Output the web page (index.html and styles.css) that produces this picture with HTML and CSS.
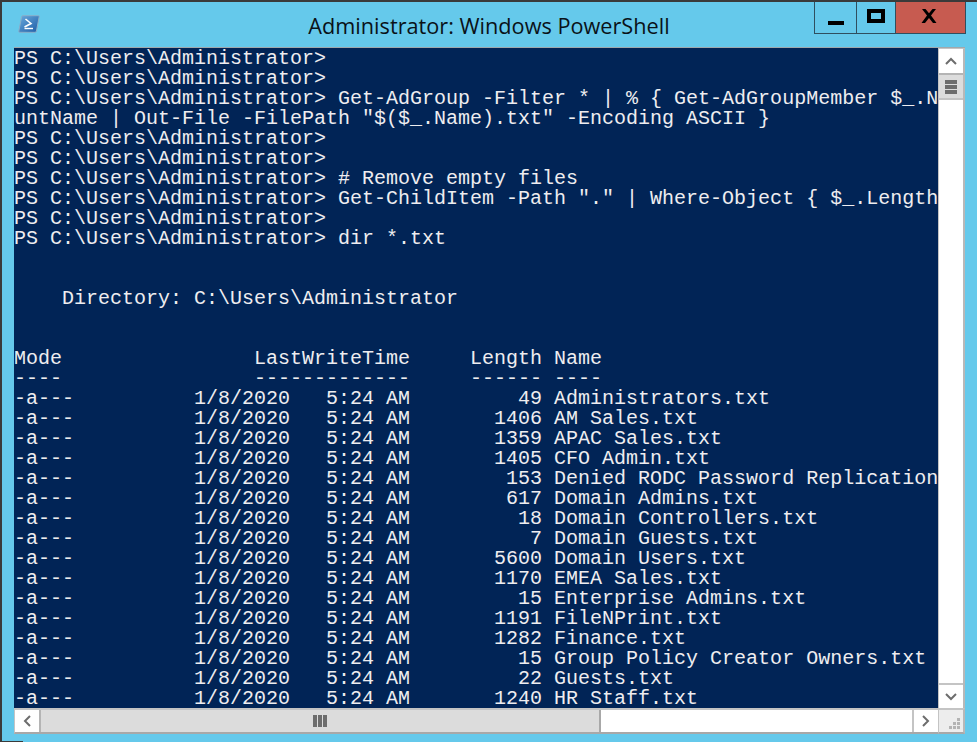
FILE: index.html
```html
<!DOCTYPE html>
<html lang="en">
<head>
<meta charset="utf-8">
<title>Administrator: Windows PowerShell</title>
<link rel="stylesheet" href="styles.css">
</head>
<body>
<div class="window">
  <header class="titlebar">
    <svg class="app-icon" width="22" height="18" viewBox="0 0 22 18">
      <defs><linearGradient id="g" x1="0" y1="0" x2="1" y2="1"><stop offset="0" stop-color="#6aa9dc"/><stop offset="1" stop-color="#1c5ca6"/></linearGradient></defs>
      <path d="M4.8 0.7 H20.3 Q21.5 0.7 21.2 1.8 L18.4 16.2 Q18.2 17.3 17 17.3 H1.7 Q0.5 17.3 0.8 16.2 L3.6 1.8 Q3.8 0.7 4.8 0.7Z" fill="url(#g)" stroke="#8aaec9"/>
      <path d="M7.5 4 L13 8.5 L6.5 12" fill="none" stroke="#fff" stroke-width="1.6"/>
      <path d="M6.5 13.5 H15" stroke="#fff" stroke-width="1.4"/>
    </svg>
    <h1 class="title">Administrator: Windows PowerShell</h1>
    <div class="controls">
      <div class="ctl ctl-min"><span class="min-glyph"></span></div>
      <div class="ctl ctl-max"><span class="max-glyph"></span></div>
      <div class="ctl ctl-close">
        <svg width="16" height="14" viewBox="0 0 16 14"><path d="M1 0 H4.5 L8 4.2 L11.5 0 H15 L10 6.5 L15.5 14 H12 L8 9 L4 14 H0.5 L6 6.5Z" fill="#000"/></svg>
      </div>
    </div>
  </header>
  <div class="client">
    <pre class="console">PS C:\Users\Administrator&gt;
PS C:\Users\Administrator&gt;
PS C:\Users\Administrator&gt; Get-AdGroup -Filter * | % { Get-AdGroupMember $_.N
untName | Out-File -FilePath "$($_.Name).txt" -Encoding ASCII }
PS C:\Users\Administrator&gt;
PS C:\Users\Administrator&gt;
PS C:\Users\Administrator&gt; # Remove empty files
PS C:\Users\Administrator&gt; Get-ChildItem -Path "." | Where-Object { $_.Length
PS C:\Users\Administrator&gt;
PS C:\Users\Administrator&gt; dir *.txt


    Directory: C:\Users\Administrator


Mode                LastWriteTime     Length Name
----                -------------     ------ ----
-a---          1/8/2020   5:24 AM         49 Administrators.txt
-a---          1/8/2020   5:24 AM       1406 AM Sales.txt
-a---          1/8/2020   5:24 AM       1359 APAC Sales.txt
-a---          1/8/2020   5:24 AM       1405 CFO Admin.txt
-a---          1/8/2020   5:24 AM        153 Denied RODC Password Replication
-a---          1/8/2020   5:24 AM        617 Domain Admins.txt
-a---          1/8/2020   5:24 AM         18 Domain Controllers.txt
-a---          1/8/2020   5:24 AM          7 Domain Guests.txt
-a---          1/8/2020   5:24 AM       5600 Domain Users.txt
-a---          1/8/2020   5:24 AM       1170 EMEA Sales.txt
-a---          1/8/2020   5:24 AM         15 Enterprise Admins.txt
-a---          1/8/2020   5:24 AM       1191 FileNPrint.txt
-a---          1/8/2020   5:24 AM       1282 Finance.txt
-a---          1/8/2020   5:24 AM         15 Group Policy Creator Owners.txt
-a---          1/8/2020   5:24 AM         22 Guests.txt
-a---          1/8/2020   5:24 AM       1240 HR Staff.txt</pre>
    <div class="vscroll">
      <div class="sbtn">
        <svg width="12" height="8" viewBox="0 0 12 8"><path d="M1 7 L6 2 L11 7" fill="none" stroke="#6d6d6d" stroke-width="2"/></svg>
      </div>
      <div class="vthumb"><span class="grip-v"></span><span class="grip-v"></span><span class="grip-v"></span></div>
      <div class="vtrack"></div>
      <div class="sbtn sbtn-down">
        <svg width="12" height="8" viewBox="0 0 12 8"><path d="M1 1 L6 6 L11 1" fill="none" stroke="#6d6d6d" stroke-width="2"/></svg>
      </div>
    </div>
    <div class="hscroll">
      <div class="hbtn">
        <svg width="8" height="12" viewBox="0 0 8 12"><path d="M7 1 L2 6 L7 11" fill="none" stroke="#6d6d6d" stroke-width="2"/></svg>
      </div>
      <div class="hthumb"><span class="grip-h"></span><span class="grip-h"></span><span class="grip-h"></span></div>
      <div class="htrack"></div>
      <div class="hbtn hbtn-right">
        <svg width="8" height="12" viewBox="0 0 8 12"><path d="M1 1 L6 6 L1 11" fill="none" stroke="#6d6d6d" stroke-width="2"/></svg>
      </div>
    </div>
    <div class="corner">
      <svg width="12" height="12" viewBox="0 0 12 12" fill="#b4b4b4"><rect x="8" y="0" width="3" height="3"/><rect x="4" y="4" width="3" height="3"/><rect x="8" y="4" width="3" height="3"/><rect x="0" y="8" width="3" height="3"/><rect x="4" y="8" width="3" height="3"/><rect x="8" y="8" width="3" height="3"/></svg>
    </div>
  </div>
</div>
</body>
</html>
```
FILE: styles.css
```css
* { box-sizing: border-box; }
html, body { margin: 0; padding: 0; }
body { width: 977px; height: 742px; overflow: hidden; background: #65c9eb; }
.window {
  position: relative;
  width: 977px; height: 742px;
  display: flex; flex-direction: column;
  background: #65c9eb;
  border-top: 2px solid #3a3a3a;
  border-left: 2px solid #3a3a3a;
  padding: 0 11px 0 12px;
}
.window::after {
  content: "";
  position: absolute; left: -2px; bottom: 0;
  width: 23px; height: 1px;
  background: #3a3a3a;
}
.titlebar {
  height: 45px; flex: none;
  display: flex; align-items: flex-start;
}
.app-icon { margin: 13px 0 0 4px; flex: none; }
.title {
  flex: 1; margin: 10px 0 0 0;
  text-align: center;
  font: 400 21.7px/28px "Open Sans", "Noto Sans", sans-serif;
  color: #0a1218;
  padding-left: 124px;
  white-space: nowrap;
}
.controls { display: flex; height: 32px; flex: none; border: 1px solid #2f4f5f; border-top: 0; }
.ctl { display: flex; align-items: center; justify-content: center; }
.ctl-min { width: 42px; border-right: 1px solid #2f4f5f; }
.ctl-max { width: 39px; border-right: 1px solid #2f4f5f; }
.ctl-close { width: 69px; background: #c75b50; padding: 0 3px 4px 0; }
.min-glyph { width: 16px; height: 4px; background: #000; margin-top: 10px; }
.max-glyph { width: 18px; height: 14px; border: 4px solid #000; margin-bottom: 4px; }
.client {
  display: grid;
  grid-template-columns: 924px 27px;
  grid-template-rows: 660px 26px;
  border-top: 1px solid #a0a8ac;
  width: 951px;
}
.console {
  margin: 0; overflow: hidden;
  background: #012456; color: #eeedf0;
  font: 20px/20px "Liberation Mono", monospace;
  padding: 1px 0 0;
  white-space: pre;
}
.vscroll {
  display: flex; flex-direction: column;
  background: #fff;
  border-left: 1px solid #c4c4c4;
  border-right: 2px solid #b8b8b8;
  border-top: 1px solid #c4c4c4;
}
.sbtn { height: 26px; flex: none; display: flex; align-items: center; justify-content: center; border-bottom: 2px solid #b4b4b4; }
.sbtn-down { border-bottom: 0; border-top: 2px solid #c4c4c4; height: 25px; }
.vthumb {
  height: 25px; flex: none; background: #dcdcdc;
  border-bottom: 2px solid #c4c4c4;
  display: flex; flex-direction: column; align-items: center; justify-content: center; gap: 1px;
}
.grip-v { width: 12px; height: 4px; background: #6d6d6d; }
.vtrack { flex: 1; }
.hscroll {
  display: flex;
  background: #fff;
  border-top: 2px solid #c4c4c4;
  border-bottom: 2px solid #a8a8a8;
  border-left: 1px solid #c4c4c4;
}
.hbtn { width: 26px; flex: none; background: #fff; display: flex; align-items: center; justify-content: center; border-right: 2px solid #b4b4b4; }
.hbtn-right { width: 26px; border-right: 0; border-left: 2px solid #c4c4c4; }
.hthumb {
  width: 560px; flex: none;
  background: #dcdcdc;
  border-right: 2px solid #a8a8a8;
  display: flex; align-items: center; justify-content: center; gap: 1px;
}
.htrack { flex: 1; }
.grip-h { width: 4px; height: 12px; background: #6d6d6d; }
.corner {
  background: #ededed;
  border-top: 2px solid #c4c4c4;
  border-bottom: 2px solid #a8a8a8;
  border-right: 2px solid #b8b8b8;
  border-left: 1px solid #c4c4c4;
  display: flex; align-items: flex-end; justify-content: flex-end;
  padding: 0 2px 2px 0;
}
```
